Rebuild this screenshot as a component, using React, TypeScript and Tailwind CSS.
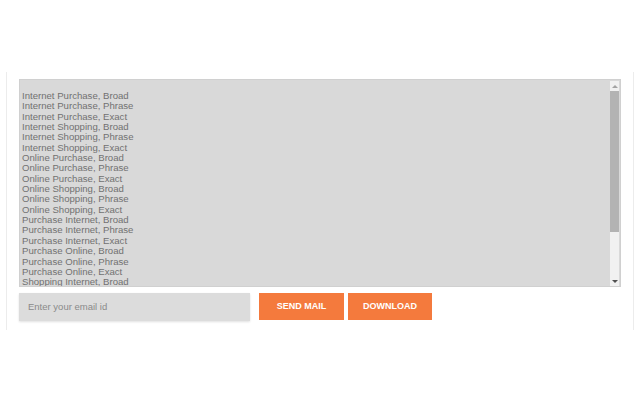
import React from "react";

const phrases = [
  "Internet Purchase",
  "Internet Shopping",
  "Online Purchase",
  "Online Shopping",
  "Purchase Internet",
  "Purchase Online",
];
const matchTypes = ["Broad", "Phrase", "Exact"];
const keywords = [...phrases.flatMap((p) => matchTypes.map((m) => `${p}, ${m}`)), "Shopping Internet, Broad"];

export default function App() {
  return (
    <div className="h-[400px] w-[640px] overflow-hidden bg-white" style={{ fontFamily: '"Liberation Sans", Arial, sans-serif' }}>
      <div className="mx-[6px] mt-[72px] h-[258px] border-x border-[#ececec] px-[12px] pt-[7px]">
        <div className="flex h-[208px] overflow-hidden border border-[#d0d0d0] bg-[#d9d9d9]">
          <div className="flex-1 overflow-hidden pl-[2px] pt-[11px] text-[9.6px] leading-[10.35px] text-[#717171]">
            {keywords.map((k) => (
              <div key={k} className="whitespace-nowrap">
                {k}
              </div>
            ))}
          </div>
          <div className="mr-[1px] mt-[1px] flex w-[9px] flex-col bg-[#f1f1f1]">
            <div className="flex h-[10px] items-center justify-center">
              <div className="h-0 w-0 border-x-[3px] border-b-[3px] border-x-transparent border-b-[#a3a3a3]" />
            </div>
            <div className="h-[141px] bg-[#b3b3b3]" />
            <div className="flex-1" />
            <div className="flex h-[10px] items-center justify-center">
              <div className="h-0 w-0 border-x-[3px] border-t-[3px] border-x-transparent border-t-[#505050]" />
            </div>
          </div>
        </div>
        <div className="mt-[6px] flex items-start">
          <div className="flex h-[28px] w-[231px] items-center bg-[#dcdcdc] pl-[9px] text-[9.5px] text-[#8a8a8a] shadow-[0_1px_2px_rgba(0,0,0,0.12)]">
            Enter your email id
          </div>
          <button className="ml-[9px] h-[27px] w-[85px] bg-[#f47a3d] text-[9px] font-bold text-white">SEND MAIL</button>
          <button className="ml-[4px] h-[27px] w-[84px] bg-[#f47a3d] text-[9px] font-bold text-white">DOWNLOAD</button>
        </div>
      </div>
    </div>
  );
}
